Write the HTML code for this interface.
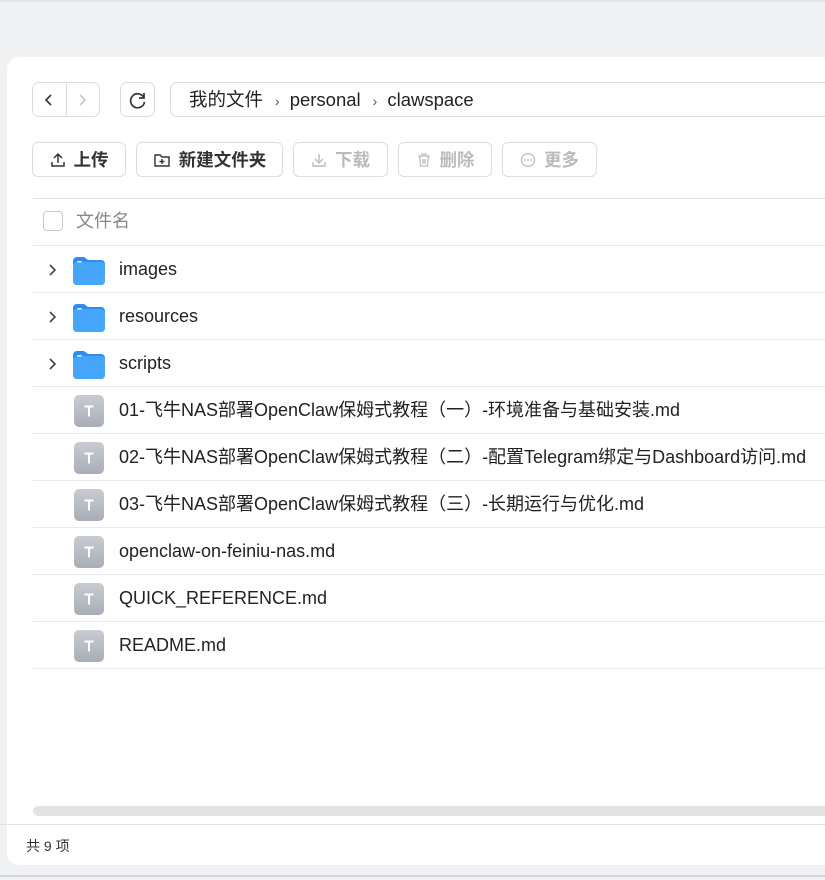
<!DOCTYPE html>
<html><head><meta charset="utf-8"><style>
*{margin:0;padding:0;box-sizing:border-box}
body{width:825px;height:880px;background:#f0f1f3;font-family:"Liberation Sans","Noto Sans CJK SC",sans-serif;position:relative;overflow:hidden}
.topline{position:absolute;left:0;top:0;width:825px;height:2px;background:#e4e5e8}
.card{position:absolute;left:7px;top:57px;width:830px;height:808px;background:#fff;border-radius:12px}
.abs{position:absolute}
.btn{position:absolute;top:142px;height:35px;border:1px solid #dcdde0;border-radius:6px;display:flex;align-items:center;justify-content:center;font-size:17.5px;font-weight:bold;color:#333;gap:8px}
.btn.dis{color:#bbb}
.row{position:absolute;left:33px;width:800px;height:47px;border-bottom:1px solid #e8e9eb;font-size:18px;color:#222}
.chev{position:absolute;left:15px;top:17px}
.fold{position:absolute;left:40px;top:10px;width:32px;height:29px}
.doc{position:absolute;left:41px;top:8px;width:30px;height:32px;border-radius:5px;background:linear-gradient(#c9ccd2,#a9adb5);display:flex;align-items:center;justify-content:center}
.nm{position:absolute;left:86px;top:11px;white-space:nowrap;line-height:24px}
</style></head><body>
<div class="topline"></div>
<div class="card"></div>
<div class="abs" style="left:32px;top:82px;width:68px;height:35px;border:1px solid #dcdde0;border-radius:7px"></div>
<div class="abs" style="left:66px;top:83px;width:1px;height:33px;background:#dcdde0"></div>
<svg class="abs" style="left:43px;top:93px" width="12" height="14"><path d="M8 2L3 7l5 5" stroke="#333" stroke-width="1.6" fill="none"/></svg>
<svg class="abs" style="left:76px;top:93px" width="12" height="14"><path d="M4 2l5 5-5 5" stroke="#bbb" stroke-width="1.4" fill="none"/></svg>
<div class="abs" style="left:120px;top:82px;width:35px;height:35px;border:1px solid #dcdde0;border-radius:7px"></div>
<svg class="abs" style="left:128px;top:90px" width="20" height="20"><path d="M15.5 7A7 7 0 1 0 16.5 12" stroke="#333" stroke-width="1.7" fill="none"/><path d="M16 3v5h-5" stroke="#333" stroke-width="1.7" fill="none"/></svg>
<div class="abs" style="left:170px;top:82px;width:700px;height:35px;border:1px solid #dcdde0;border-radius:7px"></div>
<div class="abs" style="left:189px;top:88px;font-size:18.5px;line-height:24px;color:#222;white-space:nowrap">我的文件<span style="color:#555;margin:0 10px 0 12px;font-size:14px">›</span>personal<span style="color:#555;margin:0 10px 0 12px;font-size:14px">›</span>clawspace</div>
<div class="btn" style="left:32px;width:94px"><svg width="16" height="16"><path d="M8 11V2M4 6l4-4 4 4M2 10v4h12v-4" stroke="#333" stroke-width="1.5" fill="none"/></svg>上传</div>
<div class="btn" style="left:136px;width:147px"><svg width="18" height="16"><path d="M2 3h5l2 2h7v9H2z" stroke="#333" stroke-width="1.4" fill="none"/><path d="M9 7v5M6.5 9.5h5" stroke="#333" stroke-width="1.4"/></svg>新建文件夹</div>
<div class="btn dis" style="left:293px;width:95px"><svg width="16" height="16"><path d="M8 2v9M4 7l4 4 4-4M2 10v4h12v-4" stroke="#bbb" stroke-width="1.4" fill="none"/></svg>下载</div>
<div class="btn dis" style="left:398px;width:94px"><svg width="16" height="16"><path d="M2 4h12M6 4V2h4v2M3.5 4l1 10h7l1-10M7 7v5M9 7v5" stroke="#bbb" stroke-width="1.3" fill="none"/></svg>删除</div>
<div class="btn dis" style="left:502px;width:95px"><svg width="16" height="16"><circle cx="8" cy="8" r="6.5" stroke="#bbb" stroke-width="1.3" fill="none"/><circle cx="5" cy="8" r=".9" fill="#bbb"/><circle cx="8" cy="8" r=".9" fill="#bbb"/><circle cx="11" cy="8" r=".9" fill="#bbb"/></svg>更多</div>
<div class="abs" style="left:33px;top:198px;width:800px;height:1px;background:#e2e3e5"></div>
<div class="abs" style="left:43px;top:211px;width:20px;height:20px;border:1.5px solid #c8c9cc;border-radius:4px"></div>
<div class="abs" style="left:76px;top:209px;font-size:18px;line-height:24px;color:#888">文件名</div>
<div class="abs" style="left:33px;top:245px;width:800px;height:1px;background:#e8e9eb"></div>

<div class="row" style="top:246px"><svg class="chev" width="10" height="14"><path d="M2 2l5 5-5 5" stroke="#444" stroke-width="1.6" fill="none"/></svg><svg class="fold" viewBox="0 0 32 29"><path d="M0 5a4 4 0 0 1 4-4h7l4 3h13a4 4 0 0 1 4 4v17a4 4 0 0 1-4 4H4a4 4 0 0 1-4-4z" fill="#2c8cf3"/><path d="M0 10a4 4 0 0 1 4-4h24a4 4 0 0 1 4 4v15a4 4 0 0 1-4 4H4a4 4 0 0 1-4-4z" fill="#45a6fb"/><rect x="4" y="5" width="5" height="1.6" rx=".8" fill="#d6eaff"/></svg><span class="nm">images</span></div>
<div class="row" style="top:293px"><svg class="chev" width="10" height="14"><path d="M2 2l5 5-5 5" stroke="#444" stroke-width="1.6" fill="none"/></svg><svg class="fold" viewBox="0 0 32 29"><path d="M0 5a4 4 0 0 1 4-4h7l4 3h13a4 4 0 0 1 4 4v17a4 4 0 0 1-4 4H4a4 4 0 0 1-4-4z" fill="#2c8cf3"/><path d="M0 10a4 4 0 0 1 4-4h24a4 4 0 0 1 4 4v15a4 4 0 0 1-4 4H4a4 4 0 0 1-4-4z" fill="#45a6fb"/><rect x="4" y="5" width="5" height="1.6" rx=".8" fill="#d6eaff"/></svg><span class="nm">resources</span></div>
<div class="row" style="top:340px"><svg class="chev" width="10" height="14"><path d="M2 2l5 5-5 5" stroke="#444" stroke-width="1.6" fill="none"/></svg><svg class="fold" viewBox="0 0 32 29"><path d="M0 5a4 4 0 0 1 4-4h7l4 3h13a4 4 0 0 1 4 4v17a4 4 0 0 1-4 4H4a4 4 0 0 1-4-4z" fill="#2c8cf3"/><path d="M0 10a4 4 0 0 1 4-4h24a4 4 0 0 1 4 4v15a4 4 0 0 1-4 4H4a4 4 0 0 1-4-4z" fill="#45a6fb"/><rect x="4" y="5" width="5" height="1.6" rx=".8" fill="#d6eaff"/></svg><span class="nm">scripts</span></div>
<div class="row" style="top:387px"><div class="doc"><svg width="14" height="14"><path d="M2.5 2.5h9M7 2.5v10" stroke="#fff" stroke-width="2"/></svg></div><span class="nm">01-飞牛NAS部署OpenClaw保姆式教程（一）-环境准备与基础安装.md</span></div>
<div class="row" style="top:434px"><div class="doc"><svg width="14" height="14"><path d="M2.5 2.5h9M7 2.5v10" stroke="#fff" stroke-width="2"/></svg></div><span class="nm">02-飞牛NAS部署OpenClaw保姆式教程（二）-配置Telegram绑定与Dashboard访问.md</span></div>
<div class="row" style="top:481px"><div class="doc"><svg width="14" height="14"><path d="M2.5 2.5h9M7 2.5v10" stroke="#fff" stroke-width="2"/></svg></div><span class="nm">03-飞牛NAS部署OpenClaw保姆式教程（三）-长期运行与优化.md</span></div>
<div class="row" style="top:528px"><div class="doc"><svg width="14" height="14"><path d="M2.5 2.5h9M7 2.5v10" stroke="#fff" stroke-width="2"/></svg></div><span class="nm">openclaw-on-feiniu-nas.md</span></div>
<div class="row" style="top:575px"><div class="doc"><svg width="14" height="14"><path d="M2.5 2.5h9M7 2.5v10" stroke="#fff" stroke-width="2"/></svg></div><span class="nm">QUICK_REFERENCE.md</span></div>
<div class="row" style="top:622px"><div class="doc"><svg width="14" height="14"><path d="M2.5 2.5h9M7 2.5v10" stroke="#fff" stroke-width="2"/></svg></div><span class="nm">README.md</span></div>
<div class="abs" style="left:33px;top:806px;width:800px;height:10px;background:#e2e3e4;border-radius:5px"></div>
<div class="abs" style="left:0;top:824px;width:825px;height:1px;background:#dedfe2"></div>
<div class="abs" style="left:26px;top:836px;font-size:14px;color:#333">共 9 项</div>
<div class="abs" style="left:0;top:875px;width:825px;height:2px;background:#d4d5d8"></div>
</body></html>
